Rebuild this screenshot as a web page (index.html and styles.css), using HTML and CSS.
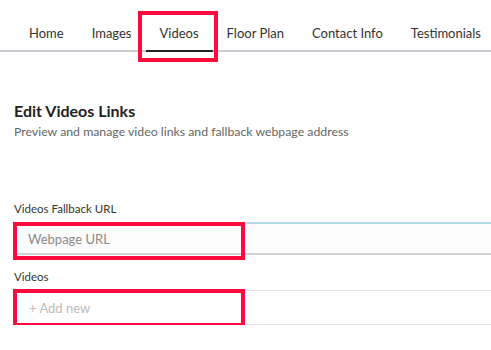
FILE: index.html
```html
<!DOCTYPE html>
<html lang="en">
<head>
  <meta charset="UTF-8">
  <meta name="viewport" content="width=device-width, initial-scale=1.0">
  <title>Edit Videos Links</title>
  <link rel="stylesheet" href="styles.css">
</head>
<body>
  <!-- tabs -->
  <nav class="tabs">
    <a class="tab">Home</a>
    <a class="tab">Images</a>
    <a class="tab active">Videos<span class="mark mark-tab"></span></a>
    <a class="tab">Floor Plan</a>
    <a class="tab">Contact Info</a>
    <a class="tab">Testimonials</a>
  </nav>

  <main class="content">
    <h1 class="title">Edit Videos Links</h1>
    <p class="subtitle">Preview and manage video links and fallback webpage address</p>

    <div class="group">
      <label class="label" for="fallback">Videos Fallback URL</label>
      <div class="field field-url">
        <input type="text" id="fallback" class="input" placeholder="Webpage URL">
        <span class="mark mark-field"></span>
      </div>
    </div>

    <div class="group group-videos">
      <div class="label">Videos</div>
      <div class="field field-add">
        <span class="add">+ Add new</span>
        <span class="mark mark-field"></span>
      </div>
    </div>
  </main>
</body>
</html>
```

FILE: styles.css
```css
/* base */
body {
  margin: 0;
  font-family: Lato, "Open Sans", sans-serif;
  background: #fff;
  color: #333;
  overflow: hidden;
}

/* tabs */
.tabs {
  display: flex;
  padding-left: 15px;
  border-bottom: 2px solid #c9cdd5;
  white-space: nowrap;
}

.tab {
  position: relative;
  flex-shrink: 0;
  padding: 24px 14px 8px;
  margin-bottom: -2px;
  border-bottom: 2px solid transparent;
  font-size: 13px;
  line-height: 18px;
  color: #333;
}

.tab.active {
  border-bottom-color: #222;
}

/* annotation boxes */
.mark {
  position: absolute;
  border: 4px solid #ff0a3c;
  box-sizing: border-box;
  pointer-events: none;
}

.mark-tab {
  left: -8px;
  right: -5px;
  top: 11px;
  height: 51px;
}

.mark-field {
  left: -1px;
  top: -2px;
  width: 232px;
  height: 38px;
}

/* content */
.content {
  padding: 0 0 0 14px;
}

.title {
  margin: 49px 0 0;
  font-size: 16px;
  line-height: 20px;
  font-weight: 700;
  color: #222;
}

.subtitle {
  margin: 3px 0 0;
  font-size: 12.3px;
  line-height: 16px;
  color: #666;
}

.group {
  margin-top: 62px;
}

.group-videos {
  margin-top: 15px;
}

.label {
  display: block;
  font-size: 11.5px;
  line-height: 14px;
  color: #333;
  margin-bottom: 6px;
}

.field {
  position: relative;
  height: 33px;
  box-sizing: border-box;
}

.field-url {
  border-top: 2px solid #b5dceb;
  border-bottom: 2px solid #d2d2d2;
}

.field-add {
  border-top: 1px solid #e2e2e8;
  border-bottom: 1px solid #e2e2e8;
  height: 35px;
}

.input {
  width: 100%;
  height: 100%;
  box-sizing: border-box;
  border: none;
  outline: none;
  padding: 0 14px;
  background: #fdfcfd;
  font-family: Lato, "Open Sans", sans-serif;
  font-size: 13px;
  color: #333;
}

.input::placeholder {
  color: #8a8a8a;
}

.add {
  display: flex;
  align-items: center;
  height: 100%;
  padding-left: 15px;
  font-size: 13px;
  color: #bdbdbd;
}
```
